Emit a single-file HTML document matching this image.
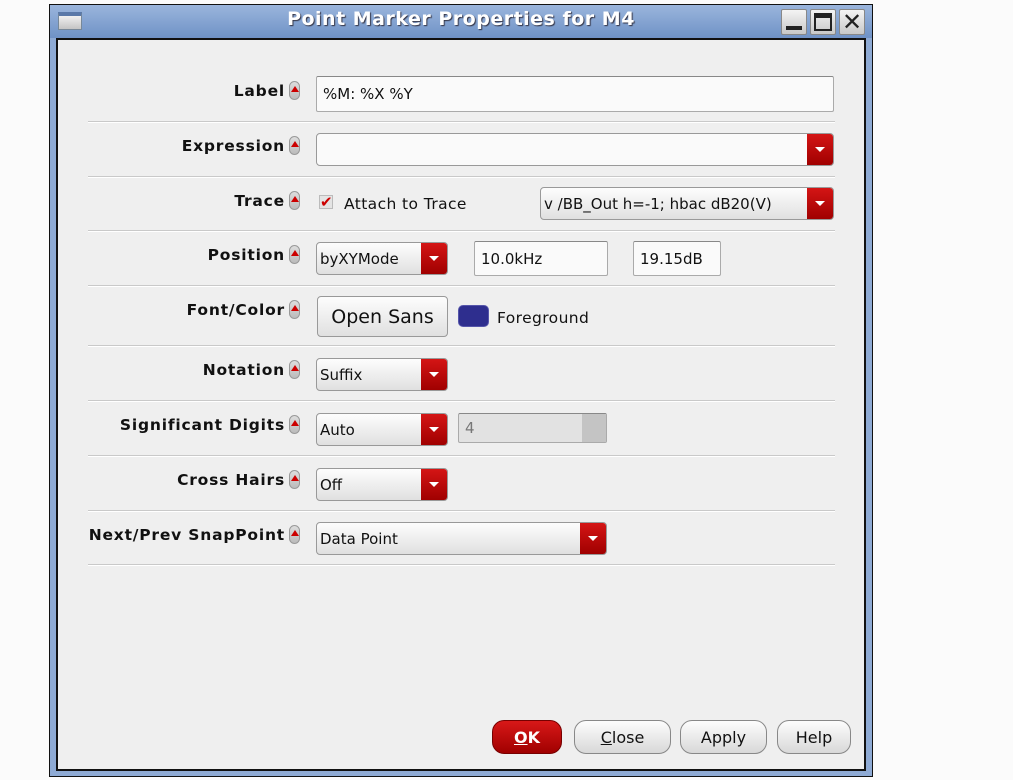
<!DOCTYPE html>
<html><head><style>
*{margin:0;padding:0;box-sizing:border-box}
body{width:1013px;height:780px;background:#fbfbfb;position:relative;overflow:hidden;font-family:"DejaVu Sans","Liberation Sans",sans-serif}
.a{position:absolute}
.frame{left:49px;top:4px;width:824px;height:773px;background:#8eaad4;border:1px solid #111}
.title{left:50px;top:5px;width:822px;height:33px;background:linear-gradient(#9ab5dc,#6f92c6)}
.content{left:56px;top:38px;width:810px;height:733px;background:#efefef;border:2px solid #111}
.ttl{left:50px;top:8px;width:822px;text-align:center;color:#fff;font-weight:bold;font-size:19px;letter-spacing:0.5px;text-shadow:1px 1px 1px #334}
.wb{top:9px;width:26px;height:26px;background:linear-gradient(#f4f4f4,#c8c8c8);border:1px solid #888;border-radius:2px}
.lbl{right:728px;font-weight:bold;font-size:15.5px;letter-spacing:0.8px;color:#111;text-align:right;white-space:nowrap}
.ic{width:11px;height:19px;border:1px solid #999;border-radius:6px;background:linear-gradient(#ddd,#bbb)}
.ic:after{content:"";position:absolute;left:1px;top:4px;border-left:4px solid transparent;border-right:4px solid transparent;border-bottom:6px solid #c00}
.sep{left:88px;width:747px;height:2px;background:#c9c9c9;border-bottom:1px solid #fff}
.in{background:#fafafa;border:1px solid #aaa;border-top-color:#888;border-radius:2px;font-size:15px;padding:0 0 0 6px;color:#111;display:flex;align-items:center}
.cb{background:linear-gradient(#fdfdfd,#e0e0e0);border:1px solid #999;border-radius:4px;font-size:15px;color:#111;display:flex;align-items:center;padding-left:3px;overflow:hidden;white-space:nowrap}
.cb .ar{position:absolute;right:0;top:0;bottom:0;width:26px;background:linear-gradient(#d41515,#a00000)}
.cb .ar:after{content:"";position:absolute;left:8px;top:13px;border-left:5px solid transparent;border-right:5px solid transparent;border-top:5px solid #fff}
.btn{top:720px;height:34px;border:1px solid #888;border-radius:12px;background:linear-gradient(#fdfdfd,#d8d8d8);font-size:16px;display:flex;align-items:center;justify-content:center;color:#111}
</style></head><body>
<div class="a frame"></div>
<div class="a title"></div>
<div class="a" style="left:58px;top:12px;width:24px;height:18px;background:linear-gradient(#f0f0f0,#c4c4c4);border:1px solid #789;border-top:4px solid #5978a8"></div>
<div class="a ttl">Point Marker Properties for M4</div>
<div class="a wb" style="left:781px"><div class="a" style="left:4px;top:16px;width:16px;height:4px;background:#222"></div></div>
<div class="a wb" style="left:810px"><div class="a" style="left:3px;top:3px;width:18px;height:18px;border:2px solid #222;border-top-width:5px"></div></div>
<div class="a wb" style="left:839px;font-size:24px;line-height:24px;text-align:center;font-weight:bold;color:#222">✕</div>
<div class="a content"></div>

<div class="a lbl" style="top:82px">Label</div><div class="a ic" style="left:289px;top:81px"></div>
<div class="a in" style="left:316px;top:76px;width:518px;height:36px">%M: %X %Y</div>
<div class="a sep" style="top:121px"></div>

<div class="a lbl" style="top:137px">Expression</div><div class="a ic" style="left:289px;top:136px"></div>
<div class="a cb" style="left:316px;top:133px;width:518px;height:33px;background:#fafafa"><div class="ar"></div></div>
<div class="a sep" style="top:176px"></div>

<div class="a lbl" style="top:192px">Trace</div><div class="a ic" style="left:289px;top:191px"></div>
<div class="a" style="left:319px;top:195px;width:14px;height:14px;background:#e4e4e4;border:1px solid #bbb;color:#c00;font-size:15px;line-height:12px;font-weight:bold">✔</div>
<div class="a" style="left:344px;top:195px;font-size:15.5px;letter-spacing:0.4px;color:#111">Attach to Trace</div>
<div class="a cb" style="left:540px;top:187px;width:294px;height:33px">v /BB_Out h=-1; hbac dB20(V)<div class="ar"></div></div>
<div class="a sep" style="top:230px"></div>

<div class="a lbl" style="top:246px">Position</div><div class="a ic" style="left:289px;top:245px"></div>
<div class="a cb" style="left:316px;top:242px;width:132px;height:33px">byXYMode<div class="ar"></div></div>
<div class="a in" style="left:474px;top:241px;width:134px;height:35px">10.0kHz</div>
<div class="a in" style="left:633px;top:241px;width:88px;height:35px">19.15dB</div>
<div class="a sep" style="top:285px"></div>

<div class="a lbl" style="top:301px">Font/Color</div><div class="a ic" style="left:289px;top:300px"></div>
<div class="a cb" style="left:317px;top:296px;width:131px;height:41px;font-size:19px;justify-content:center;padding:0">Open Sans</div>
<div class="a" style="left:458px;top:305px;width:31px;height:22px;background:#2e2e8e;border:1px solid #55a;border-radius:5px"></div>
<div class="a" style="left:497px;top:309px;font-size:15.5px;letter-spacing:0.4px;color:#111">Foreground</div>
<div class="a sep" style="top:345px"></div>

<div class="a lbl" style="top:361px">Notation</div><div class="a ic" style="left:289px;top:360px"></div>
<div class="a cb" style="left:316px;top:358px;width:132px;height:33px">Suffix<div class="ar"></div></div>
<div class="a sep" style="top:400px"></div>

<div class="a lbl" style="top:416px">Significant Digits</div><div class="a ic" style="left:289px;top:415px"></div>
<div class="a cb" style="left:316px;top:413px;width:132px;height:33px">Auto<div class="ar"></div></div>
<div class="a in" style="left:458px;top:413px;width:149px;height:30px;background:#e2e2e2;color:#777;font-size:15px">4<div class="a" style="right:0;top:0;width:24px;height:28px;background:#c4c4c4"></div></div>
<div class="a sep" style="top:455px"></div>

<div class="a lbl" style="top:471px">Cross Hairs</div><div class="a ic" style="left:289px;top:470px"></div>
<div class="a cb" style="left:316px;top:468px;width:132px;height:33px">Off<div class="ar"></div></div>
<div class="a sep" style="top:510px"></div>

<div class="a lbl" style="top:526px">Next/Prev SnapPoint</div><div class="a ic" style="left:289px;top:525px"></div>
<div class="a cb" style="left:316px;top:522px;width:291px;height:33px">Data Point<div class="ar"></div></div>
<div class="a sep" style="top:564px"></div>

<div class="a btn" style="left:492px;width:70px;background:linear-gradient(#d81818,#a00000);border-color:#700;color:#fff;font-weight:bold"><u>O</u>K</div>
<div class="a btn" style="left:574px;width:97px"><u>C</u>lose</div>
<div class="a btn" style="left:680px;width:87px">Apply</div>
<div class="a btn" style="left:777px;width:74px">Help</div>
</body></html>
